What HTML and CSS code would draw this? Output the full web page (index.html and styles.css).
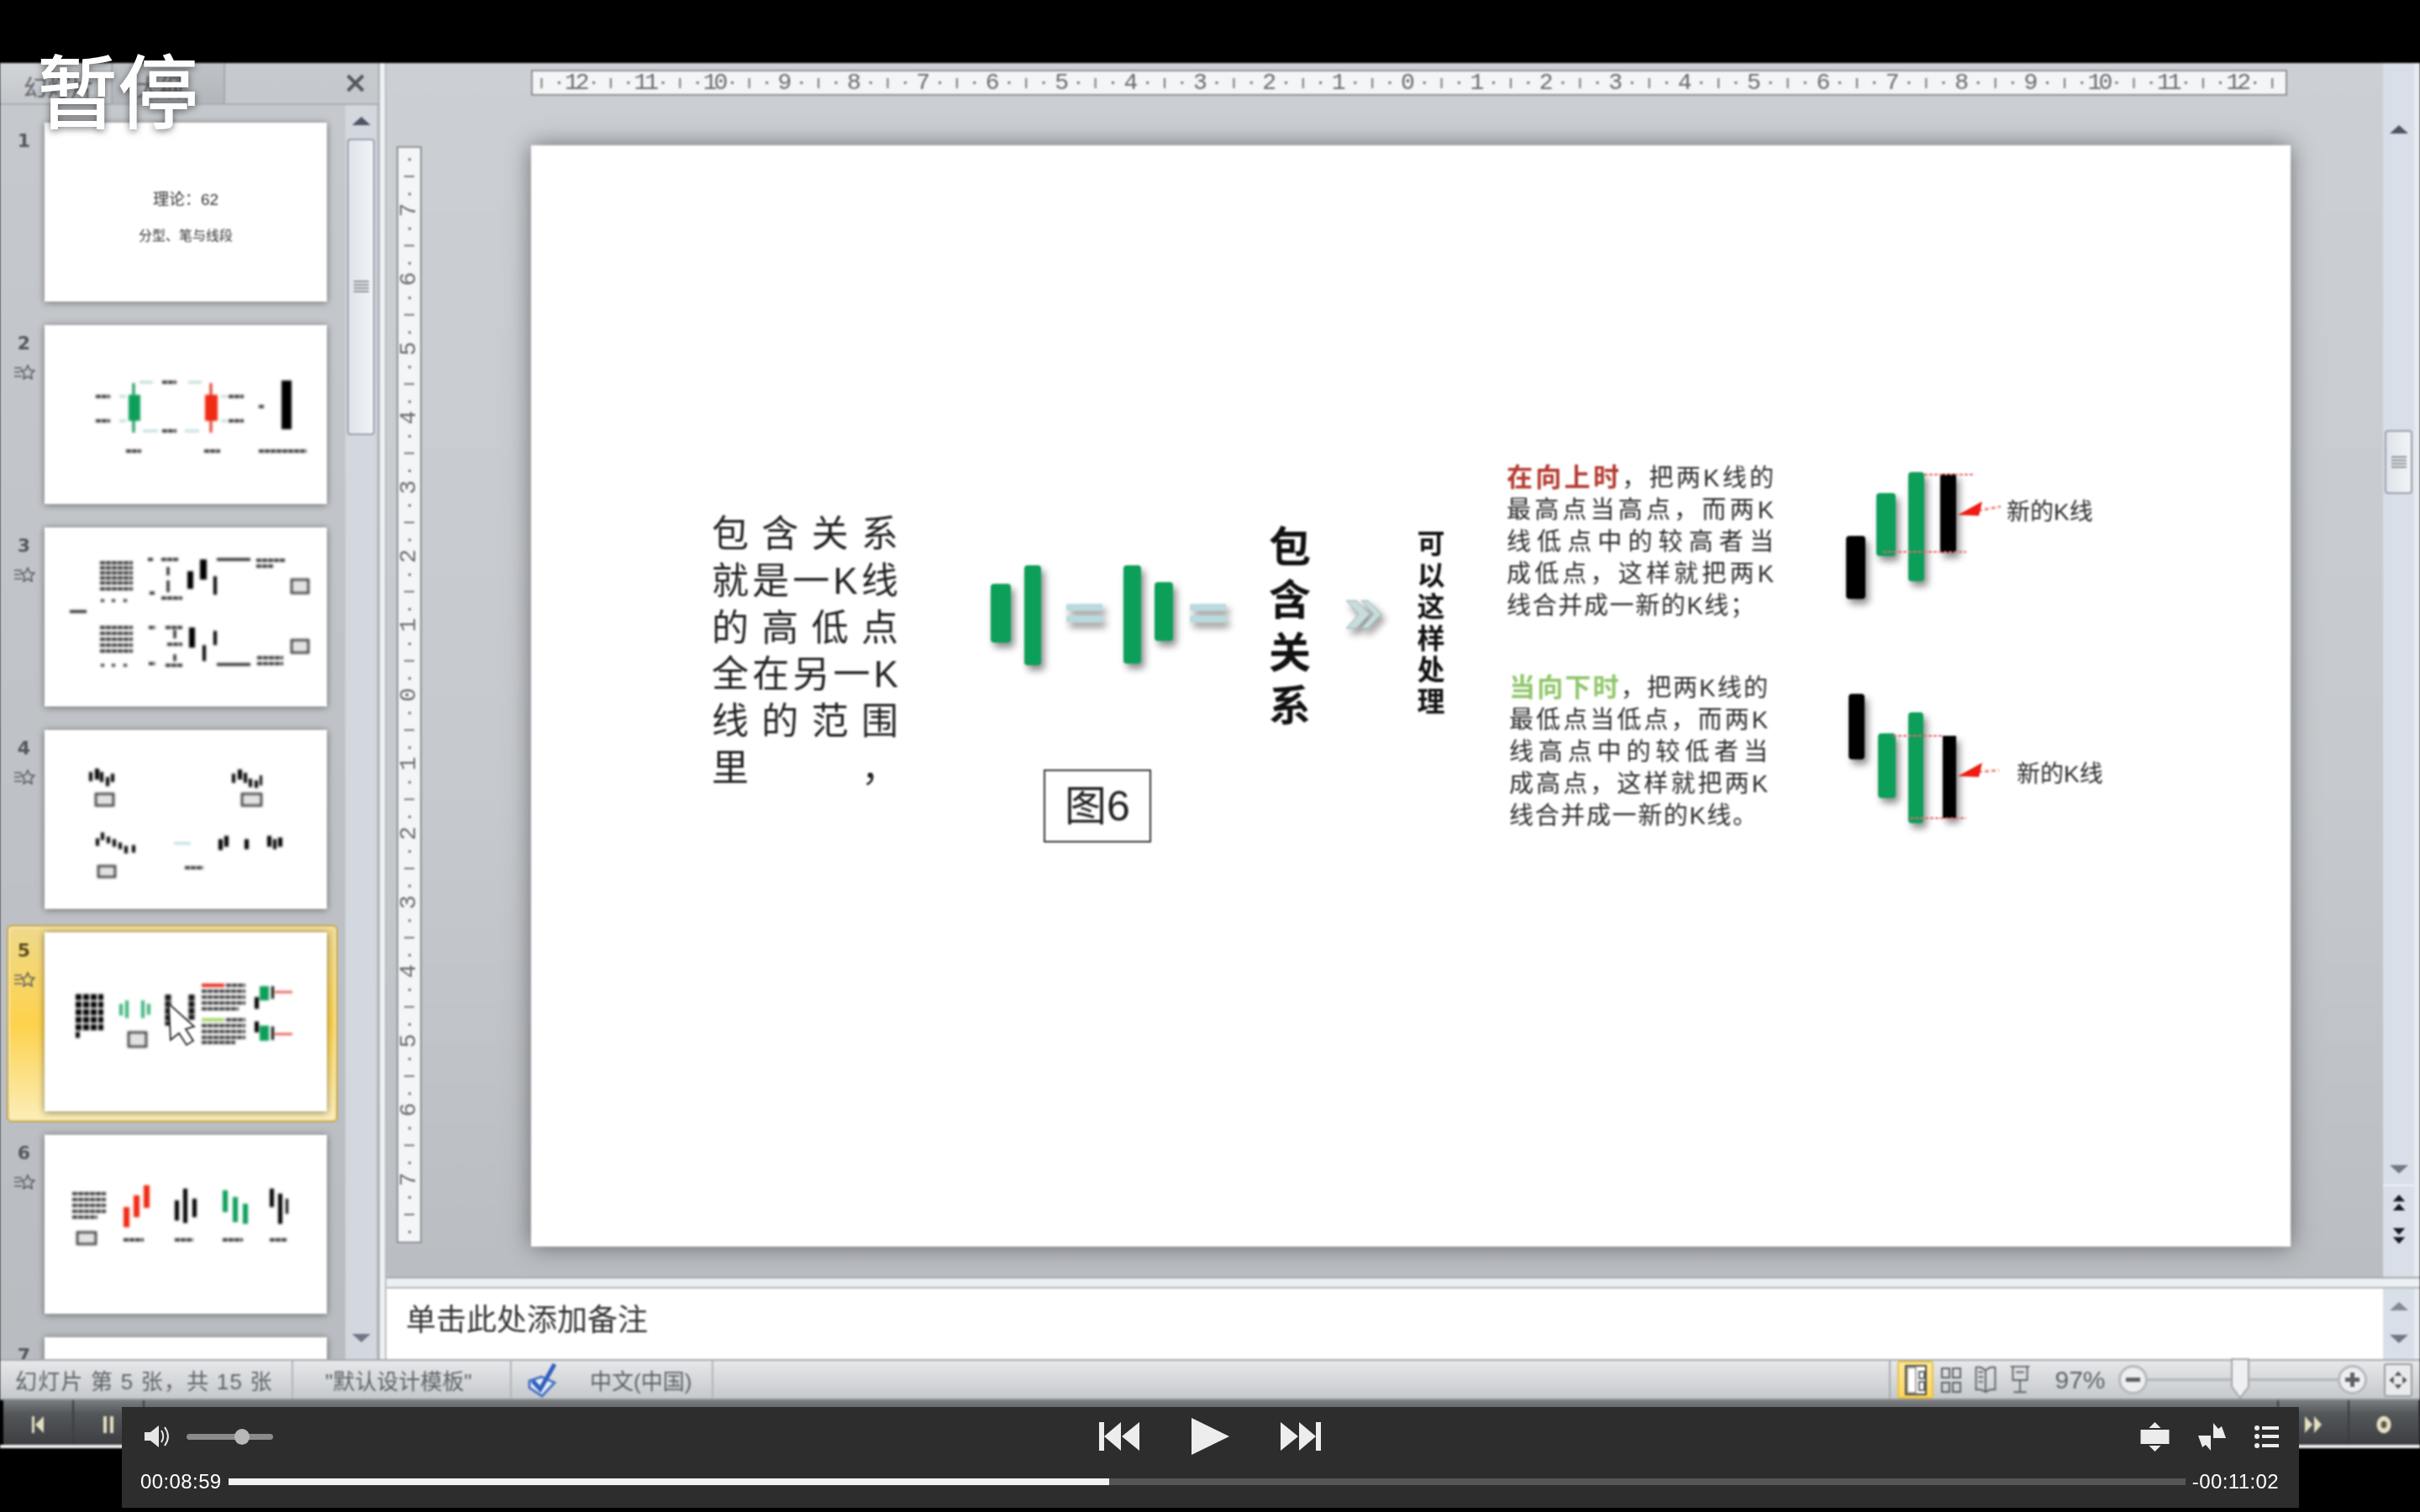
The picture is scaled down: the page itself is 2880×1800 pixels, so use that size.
FILE: index.html
```html
<!DOCTYPE html>
<html lang="zh-CN">
<head>
    <meta charset="UTF-8">
    <title>幻灯片播放</title>
    <link rel="stylesheet" href="styles.css">
</head>
<body>

    <div class="app">
        <div class="panes">

            <!-- slide list -->
            <aside class="side">
                <div class="tabs">
                    <div class="tab tab-on">幻灯片</div>
                    <div class="tab">大纲</div>
                    <svg class="close" viewBox="0 0 24 24"><path d="M3 3 21 21M21 3 3 21"/></svg>
                </div>
                <div class="side-body">
                    <div class="thumbs">
                        <div class="row">
                            <div class="gutter"><b>1</b></div>
                            <div class="thumb thumb-title">
                                <p class="t1">理论：62</p>
                                <p class="t2">分型、笔与线段</p>
                            </div>
                        </div>
                        <div class="row">
                            <div class="gutter"><b>2</b><svg class="star" viewBox="0 0 26 18"><use href="#star"/></svg></div>
                            <div class="thumb">
                                <svg viewBox="0 0 336 213">
                                    <path class="cy" d="M113 68h16M171 68h16M89 85h8M89 114h8M210 85h7M210 114h7M117 126h18M167 126h17"/>
                                    <path class="tx" d="M140 68h17M61 85h17M61 114h17M219 85h18M219 114h18M140 126h17M97 150h18M190 150h19M255 150h57M255 97h7"/>
                                    <path class="wick-g" d="M106 69v59"/><rect class="g" x="100" y="83" width="14" height="31"/>
                                    <path class="wick-r" d="M198 69v59"/><rect class="r" x="191" y="83" width="15" height="31"/>
                                    <rect class="k" x="282" y="66" width="12" height="58"/>
                                </svg>
                            </div>
                        </div>
                        <div class="row">
                            <div class="gutter"><b>3</b><svg class="star" viewBox="0 0 26 18"><use href="#star"/></svg></div>
                            <div class="thumb">
                                <svg viewBox="0 0 336 213">
                                    <path class="tx" d="M66 42h39M66 48h39M66 54h39M66 60h39M66 66h39M66 73h39M123 38h7M139 38h21M125 78h7M139 84h25M252 39h35M252 46h20M66 119h39M66 126h39M66 133h39M66 140h39M66 147h39M124 119h8M124 162h8M144 119h20M146 139h18M144 164h20M253 155h31M253 162h31"/>
                                    <path class="bar" d="M67 87h4M80 87h4M94 87h4M30 100h20M67 164h4M80 164h4M94 164h4M205 38h40M205 163h40M147 47v10M147 63v14M155 122v10M155 151v8"/>
                                    <rect class="k" x="170" y="52" width="7" height="21"/><rect class="k" x="185" y="38" width="8" height="24"/><rect class="k" x="201" y="58" width="4" height="22"/>
                                    <rect class="k" x="172" y="119" width="7" height="24"/><rect class="k" x="188" y="140" width="4" height="19"/><rect class="k" x="201" y="123" width="4" height="17"/>
                                    <rect class="box" x="294" y="62" width="20" height="16"/><rect class="box" x="294" y="134" width="20" height="15"/>
                                </svg>
                            </div>
                        </div>
                        <div class="row">
                            <div class="gutter"><b>4</b><svg class="star" viewBox="0 0 26 18"><use href="#star"/></svg></div>
                            <div class="thumb">
                                <svg viewBox="0 0 336 213">
                                    <rect class="k" x="53" y="50" width="4" height="11"/><rect class="k" x="60" y="46" width="5" height="13"/><rect class="k" x="66" y="50" width="4" height="12"/><rect class="k" x="73" y="56" width="4" height="11"/><rect class="k" x="79" y="52" width="4" height="10"/>
                                    <rect class="k" x="223" y="52" width="4" height="11"/><rect class="k" x="230" y="47" width="5" height="12"/><rect class="k" x="237" y="51" width="4" height="12"/><rect class="k" x="243" y="58" width="4" height="10"/><rect class="k" x="250" y="60" width="4" height="9"/><rect class="k" x="256" y="54" width="3" height="12"/>
                                    <rect class="k" x="61" y="129" width="4" height="9"/><rect class="k" x="67" y="122" width="4" height="9"/><rect class="k" x="74" y="127" width="4" height="8"/><rect class="k" x="81" y="130" width="4" height="9"/><rect class="k" x="88" y="134" width="4" height="8"/><rect class="k" x="95" y="138" width="4" height="9"/><rect class="k" x="104" y="137" width="4" height="9"/>
                                    <rect class="k" x="207" y="130" width="5" height="13"/><rect class="k" x="214" y="126" width="5" height="13"/><rect class="k" x="238" y="130" width="5" height="12"/><rect class="k" x="265" y="126" width="5" height="13"/><rect class="k" x="272" y="130" width="4" height="12"/><rect class="k" x="278" y="128" width="5" height="11"/>
                                    <path class="cy" d="M154 135h20"/><path class="tx" d="M167 164h22"/>
                                    <rect class="box" x="61" y="76" width="21" height="14"/><rect class="box" x="235" y="76" width="23" height="14"/><rect class="box" x="64" y="162" width="20" height="13"/>
                                </svg>
                            </div>
                        </div>
                        <div class="row row-on">
                            <div class="gutter"><b>5</b><svg class="star" viewBox="0 0 26 18"><use href="#star"/></svg></div>
                            <div class="thumb">
                                <svg viewBox="0 0 336 213">
                                    <path class="big" d="M37 77h33M37 86h33M37 95h33M37 104h33M37 113h33M37 122h5"/>
                                    <rect class="g2" x="89" y="85" width="4" height="14"/><rect class="g2" x="96" y="81" width="4" height="21"/><rect class="g2" x="115" y="81" width="4" height="21"/><rect class="g2" x="122" y="85" width="4" height="13"/>
                                    <path class="col" d="M147 74v37M175 74v30"/>
                                    <path class="tx" d="M216 63h23M187 70h52M187 77h52M187 84h52M187 91h44M216 104h23M187 111h52M187 118h52M187 125h52M187 131h40"/>
                                    <path class="rd" d="M187 63h27"/><path class="rd-thin" d="M274 71h21M274 121h21"/><path class="lg" d="M187 104h27"/>
                                    <rect class="k" x="250" y="77" width="5" height="14"/><rect class="g" x="256" y="64" width="11" height="17"/><rect class="k" x="270" y="64" width="3" height="15"/>
                                    <rect class="k" x="250" y="106" width="5" height="13"/><rect class="g" x="256" y="111" width="11" height="18"/><rect class="k" x="270" y="112" width="3" height="16"/>
                                    <rect class="box" x="100" y="119" width="21" height="17"/>
                                </svg>
                                <svg class="cursor" viewBox="0 0 336 213"><path d="M148 85 150 128 160 120 169 134 177 129 168 115 178 112Z"/></svg>
                            </div>
                        </div>
                        <div class="row">
                            <div class="gutter"><b>6</b><svg class="star" viewBox="0 0 26 18"><use href="#star"/></svg></div>
                            <div class="thumb">
                                <svg viewBox="0 0 336 213">
                                    <path class="tx" d="M33 70h40M33 77h40M33 84h40M33 91h40M33 98h30M94 125h24M155 125h22M212 125h24M268 125h20"/>
                                    <rect class="box" x="39" y="116" width="22" height="14"/>
                                    <rect class="r" x="94" y="86" width="7" height="24"/><rect class="r" x="106" y="72" width="7" height="26"/><rect class="r" x="118" y="60" width="7" height="27"/>
                                    <rect class="k" x="155" y="78" width="5" height="24"/><rect class="k" x="165" y="64" width="5" height="41"/><rect class="k" x="176" y="76" width="5" height="22"/>
                                    <rect class="g" x="212" y="66" width="6" height="26"/><rect class="g" x="224" y="74" width="6" height="30"/><rect class="g" x="236" y="82" width="6" height="24"/>
                                    <rect class="k" x="268" y="64" width="5" height="22"/><rect class="k" x="278" y="70" width="5" height="36"/><rect class="k" x="287" y="76" width="3" height="18"/>
                                </svg>
                            </div>
                        </div>
                        <div class="row">
                            <div class="gutter"><b>7</b></div>
                            <div class="thumb"></div>
                        </div>
                    </div>
                    <div class="scroll scroll-side">
                        <i class="arrow arrow-up"></i>
                        <div class="scroll-thumb scroll-thumb-long"><span class="grip"></span></div>
                        <i class="arrow arrow-down arrow-end"></i>
                    </div>
                </div>
            </aside>

            <div class="split-v"></div>

            <!-- editor -->
            <main class="editor">
                <div class="work">
                    <div class="canvas">
                        <div class="ruler-h">
                            <span>12</span><span>11</span><span>10</span><span>9</span><span>8</span><span>7</span><span>6</span><span>5</span><span>4</span><span>3</span><span>2</span><span>1</span><span>0</span><span>1</span><span>2</span><span>3</span><span>4</span><span>5</span><span>6</span><span>7</span><span>8</span><span>9</span><span>10</span><span>11</span><span>12</span>
                        </div>
                        <div class="ruler-v">
                            <span>7</span><span>6</span><span>5</span><span>4</span><span>3</span><span>2</span><span>1</span><span>0</span><span>1</span><span>2</span><span>3</span><span>4</span><span>5</span><span>6</span><span>7</span>
                        </div>

                        <div class="slide">
                            <svg class="art" viewBox="0 0 2093 1311">
                                <g class="shadow">
                                    <rect class="g" x="547" y="522" width="24" height="70" rx="4"/>
                                    <rect class="g" x="587" y="500" width="20" height="119" rx="4"/>
                                    <rect class="g" x="705" y="500" width="21" height="117" rx="4"/>
                                    <rect class="g" x="742" y="520" width="22" height="70" rx="4"/>
                                    <path class="eq" d="M637 550h43M637 564h43M784 550h43M784 564h43"/>
                                    <path class="chev" d="M970 542H982L998 558 982 575H970L985 558ZM988 542H996L1012 558 996 575H988L1003 558Z"/>

                                    <rect class="k" x="1565" y="465" width="23" height="75" rx="4"/>
                                    <rect class="g" x="1601" y="414" width="23" height="75" rx="4"/>
                                    <rect class="g" x="1639" y="389" width="19" height="130" rx="4"/>
                                    <rect class="k" x="1677" y="391" width="19" height="94"/>

                                    <rect class="k" x="1568" y="653" width="19" height="78" rx="4"/>
                                    <rect class="g" x="1603" y="700" width="21" height="77" rx="4"/>
                                    <rect class="g" x="1639" y="675" width="18" height="132" rx="4"/>
                                    <rect class="k" x="1680" y="703" width="16" height="98"/>
                                </g>
                                <path class="dash" d="M1658 392h60M1609 484h99M1621 703h59M1641 801h67"/>
                                <path class="tail" d="M1722 435 1749 430M1722 746 1747 744"/>
                                <path class="head" d="M1698 440 1727 424 1723 441ZM1698 751 1727 735 1723 752Z"/>
                            </svg>

                            <div class="para">
                                <div>包含关系</div>
                                <div>就是一K线</div>
                                <div>的高低点</div>
                                <div>全在另一K</div>
                                <div>线的范围</div>
                                <div>里 ，</div>
                            </div>
                            <div class="fig-box">图6</div>
                            <div class="head-big">包含关系</div>
                            <div class="head-small">可以这样处理</div>

                            <div class="note note-up">
                                <div><b class="red">在向上时</b>，把两K线的</div>
                                <div>最高点当高点，而两K</div>
                                <div>线低点中的较高者当</div>
                                <div>成低点，这样就把两K</div>
                                <div class="line-short">线合并成一新的K线；</div>
                            </div>
                            <div class="note note-down">
                                <div><b class="green">当向下时</b>，把两K线的</div>
                                <div>最低点当低点，而两K</div>
                                <div>线高点中的较低者当</div>
                                <div>成高点，这样就把两K</div>
                                <div class="line-short">线合并成一新的K线。</div>
                            </div>
                            <div class="tag tag-up">新的K线</div>
                            <div class="tag tag-down">新的K线</div>
                        </div>
                    </div>

                    <div class="scroll scroll-main">
                        <i class="arrow arrow-up"></i>
                        <div class="scroll-thumb scroll-thumb-short"><span class="grip"></span></div>
                        <i class="arrow arrow-down arrow-low"></i>
                        <div class="page-btns">
                            <svg viewBox="0 0 20 24"><path d="M10 0 18 9H2ZM10 12 18 21H2Z"/></svg>
                            <svg viewBox="0 0 20 24"><path d="M2 3H18L10 12ZM2 15H18L10 24Z"/></svg>
                        </div>
                    </div>
                </div>

                <div class="split-h"></div>

                <div class="notes">
                    <div class="notes-text">单击此处添加备注</div>
                    <div class="scroll scroll-notes">
                        <i class="arrow arrow-up"></i>
                        <i class="arrow arrow-down"></i>
                    </div>
                </div>
            </main>
        </div>

        <!-- status bar -->
        <footer class="status">
            <div class="st st-count">幻灯片 第 5 张，共 15 张</div>
            <div class="st st-theme">"默认设计模板"</div>
            <div class="st st-lang">
                <svg class="check" viewBox="0 0 36 42"><path class="check-doc" d="M3 22 17 17 33 24 18 40 3 30Z"/><path class="check-mark" d="M7 22 16 32 33 2" /></svg>
                <span>中文(中国)</span>
            </div>
            <div class="st-right">
                <div class="view view-on"><svg viewBox="0 0 26 36"><rect class="v-line" x="1" y="1" width="24" height="34"/><rect class="v-fill" x="3" y="3" width="10" height="30"/><path class="v-thin" d="M17 8h6v8h-6zM17 20h6v10h-6z"/></svg></div>
                <div class="view"><svg viewBox="0 0 26 36"><path class="v-thin" d="M2 4h9v11H2zM15 4h9v11h-9zM2 21h9v11H2zM15 21h9v11h-9z"/></svg></div>
                <div class="view"><svg viewBox="0 0 26 40"><path class="v-thin" d="M13 8C9 4 5 3 1 4V32C5 31 9 32 13 35 17 32 21 31 25 32V4C21 3 17 4 13 8ZM13 8V35M4 10h6M4 16h6M4 22h6"/></svg></div>
                <div class="view"><svg viewBox="0 0 26 40"><path class="v-thin" d="M1 3H25M4 3V20H22V3M8 10H18M13 20V34M5 35H21"/></svg></div>
                <div class="zoom-pct">97%</div>
                <div class="zoom-btn"><i class="sign-h"></i></div>
                <div class="zoom-track"><svg class="zoom-thumb" viewBox="0 0 22 48"><path d="M1 1H21V34L11 47 1 34Z"/></svg></div>
                <div class="zoom-btn"><i class="sign-h"></i><i class="sign-v"></i></div>
                <div class="fit"><svg viewBox="0 0 34 36"><path d="M17 6 22 12H12ZM17 30 12 24H22ZM5 18 11 13V23ZM29 18 23 23V13Z"/></svg></div>
            </div>
        </footer>

        <!-- slideshow task bar, mostly hidden by the player -->
        <div class="taskbar">
            <div class="task task-first"><svg viewBox="0 0 16 24"><path d="M1 2H4V22H1ZM15 2V22L5 12Z"/></svg></div>
            <div class="task"><svg viewBox="0 0 16 24"><path d="M2 2H6V22H2ZM10 2H14V22H10Z"/></svg></div>
            <div class="task task-fill"></div>
            <div class="task task-end"><svg viewBox="0 0 22 24"><path d="M1 2 10 12 1 22ZM12 2 21 12 12 22Z"/></svg></div>
            <div class="task task-end"><svg class="rec" viewBox="0 0 24 28"><ellipse cx="12" cy="14" rx="10" ry="12"/><ellipse class="rec-in" cx="12" cy="14" rx="4" ry="5"/></svg></div>
        </div>
    </div>

    <div class="pause">暂停</div>

    <!-- video player -->
    <section class="player">
        <div class="player-top">
            <div class="vol">
                <svg class="vol-icon" viewBox="0 0 31 28"><path d="M1 9H8L18 1V27L8 19H1Z"/><path class="vol-arc" d="M21 7C24 11 24 17 21 21M25 3C30 10 30 18 25 25"/></svg>
                <div class="vol-track"><span class="vol-knob"></span></div>
            </div>
            <div class="transport">
                <svg class="skip" viewBox="0 0 48 34"><path d="M0 0H6V34H0ZM26 0V34L6 17ZM48 0V34L27 17Z"/></svg>
                <svg class="play" viewBox="0 0 46 44"><path d="M1 0 46 22 1 44Z"/></svg>
                <svg class="skip" viewBox="0 0 48 34"><path d="M0 0 21 17 0 34ZM22 0 42 17 22 34ZM42 0H48V34H42Z"/></svg>
            </div>
            <div class="tools">
                <svg class="tool-size" viewBox="0 0 34 35"><path d="M0 9H34V26H0ZM17 0 24 7H10ZM17 35 10 28H24Z"/></svg>
                <svg class="tool-size" viewBox="0 0 35 33"><path d="M19 0 25 7 29 4 34 18H19ZM16 33 10 26 6 29 1 15H16Z"/></svg>
                <svg class="tool-list" viewBox="0 0 29 27"><circle cx="3" cy="3" r="3"/><circle cx="3" cy="13" r="3"/><circle cx="3" cy="24" r="3"/><path d="M9 1H29V5H9ZM9 11H29V15H9ZM9 22H29V26H9Z"/></svg>
            </div>
        </div>
        <div class="player-bottom">
            <span class="time">00:08:59</span>
            <div class="progress"><div class="progress-done" style="width: 45%"></div></div>
            <span class="time">-00:11:02</span>
        </div>
    </section>

    <svg class="defs" width="0" height="0">
        <defs>
            <g id="star">
                <path class="star-out" d="M17 1 19.500 6.500 25 7.200 21 11 22 17 17 14 12 17 13 11 9 7.200 14.500 6.500Z"/>
                <path class="star-lines" d="M1 4H10M1 9H8M1 14H10"/>
            </g>
        </defs>
    </svg>

</body>
</html>
```

FILE: styles.css
```css
* {
    box-sizing: border-box;
}

body {
    position: relative;
    width: 2880px;
    height: 1800px;
    margin: 0;
    padding-top: 75px;
    overflow: hidden;
    background-color: #000;
    font-family: "Liberation Sans", "Noto Sans CJK SC", sans-serif;
    color: #333;
}

p {
    margin: 0;
}

.defs {
    position: absolute;
}

.app {
    display: flex;
    flex-direction: column;
    height: 1649px;
    filter: blur(1px);
}

.panes {
    display: grid;
    grid-template-columns: 450px 10px 1fr;
    height: 1543px;
}

/* slide list */
.side {
    display: flex;
    flex-direction: column;
    min-height: 0;
    background: linear-gradient(#c6c9cd, #b9bcc0);
}

.tabs {
    display: flex;
    align-items: center;
    height: 50px;
    flex-shrink: 0;
    border-bottom: 2px solid #a9adb2;
}

.tab {
    width: 134px;
    height: 100%;
    padding: 8px 0 0 28px;
    border-right: 2px solid #a4a8ad;
    font-size: 28px;
    color: #66696d;
    background: linear-gradient(#bfc3c7, #b3b6ba);
}

.tab-on {
    background: linear-gradient(#d2d5d8, #c4c7cb);
}

.close {
    width: 24px;
    height: 24px;
    margin-left: auto;
    margin-right: 15px;
    fill: none;
    stroke: #53575c;
    stroke-width: 4;
}

.side-body {
    display: flex;
    flex: 1;
    min-height: 0;
}

.thumbs {
    display: flex;
    flex-direction: column;
    gap: 28px;
    width: 411px;
    padding-top: 21px;
    overflow: hidden;
    flex-shrink: 0;
}

.row {
    position: relative;
    display: flex;
    flex-shrink: 0;
}

.row-on::before {
    content: "";
    position: absolute;
    left: 8px;
    top: -9px;
    width: 390px;
    height: 231px;
    border: 2px solid #c8a950;
    border-radius: 6px;
    background: linear-gradient(#efd98c, #fed24c 50%, #fbeeb8);
    box-shadow: inset 0 0 0 2px #f6e8b0;
}

.gutter {
    position: relative;
    display: flex;
    flex-direction: column;
    align-items: center;
    width: 53px;
    padding: 9px 0 0 4px;
    font-family: "DejaVu Sans", sans-serif;
    font-size: 22px;
    color: #54585d;
}

.gutter b {
    height: 26px;
    line-height: 26px;
}

.row-on .gutter {
    color: #5d4f1f;
}

.star {
    width: 26px;
    height: 18px;
    margin-top: 12px;
}

.star-out {
    fill: none;
    stroke: #5a5e63;
    stroke-width: 1.6;
}

.star-lines {
    stroke: #5a5e63;
    stroke-width: 1.6;
}

.thumb {
    position: relative;
    width: 336px;
    height: 213px;
    background-color: #fff;
    box-shadow: 0 1px 8px rgba(50, 50, 50, .6);
}

.thumb svg {
    display: block;
    width: 336px;
    height: 213px;
    filter: blur(1.2px);
}

.thumb .cursor {
    position: absolute;
    left: 0;
    top: 0;
    filter: none;
    fill: #fff;
    stroke: #333;
    stroke-width: 2;
}

.thumb-title {
    text-align: center;
    color: #333;
}

.t1 {
    padding-top: 76px;
    font-size: 19px;
}

.t2 {
    padding-top: 18px;
    font-size: 16px;
}

/* shapes shared by the thumbs and the slide */
.k {
    fill: #000;
}

.g {
    fill: #0c9f59;
}

.g2 {
    fill: #37b27a;
}

.r {
    fill: #f02a14;
}

.cy {
    stroke: #bfdcdc;
    stroke-width: 3;
    fill: none;
}

.tx {
    stroke: #222;
    stroke-width: 3.500;
    stroke-dasharray: 6 1;
    fill: none;
}

.big {
    stroke: #000;
    stroke-width: 7;
    stroke-dasharray: 7 2;
    fill: none;
}

.col {
    stroke: #111;
    stroke-width: 7;
    stroke-dasharray: 7 1;
    fill: none;
}

.bar {
    stroke: #111;
    stroke-width: 3;
    fill: none;
}

.rd {
    stroke: #e8261a;
    stroke-width: 4;
    fill: none;
}

.rd-thin {
    stroke: #e8261a;
    stroke-width: 2;
    fill: none;
}

.lg {
    stroke: #a6d76a;
    stroke-width: 4;
    fill: none;
}

.wick-g {
    stroke: #0c8f50;
    stroke-width: 3;
}

.wick-r {
    stroke: #d8321f;
    stroke-width: 3;
}

.box {
    fill: #e2e2e2;
    stroke: #333;
    stroke-width: 2.500;
}

/* scrollbars */
.scroll {
    position: relative;
    display: flex;
    flex-direction: column;
    align-items: center;
    width: 37px;
    flex-shrink: 0;
    background-color: #d9dfe8;
}

.arrow {
    display: block;
    width: 0;
    height: 0;
    border-left: 11px solid transparent;
    border-right: 11px solid transparent;
}

.arrow-up {
    border-bottom: 10px solid #4c5563;
}

.arrow-down {
    border-top: 10px solid #6f7785;
}

.scroll-thumb {
    display: flex;
    align-items: center;
    justify-content: center;
    width: 33px;
    border: 2px solid #9aa1ab;
    border-radius: 4px;
    background: linear-gradient(90deg, #dfe4ea, #f2f4f7);
}

.grip {
    width: 18px;
    height: 15px;
    background: repeating-linear-gradient(#8d929a 0 2px, transparent 2px 4px);
}

.scroll-side {
    padding-top: 14px;
    background-color: #d3d8df;
}

.scroll-thumb-long {
    height: 353px;
    margin-top: 16px;
}

.arrow-end {
    margin-top: auto;
    margin-bottom: 20px;
}

.scroll-main {
    padding-top: 74px;
}

.scroll-thumb-short {
    height: 76px;
    margin-top: 353px;
}

.arrow-low {
    margin-top: 799px;
}

.page-btns {
    display: flex;
    flex-direction: column;
    gap: 15px;
    width: 100%;
    align-items: center;
    margin-top: 13px;
    padding-top: 10px;
    border-top: 2px solid #eef1f5;
}

.page-btns svg {
    width: 18px;
    height: 22px;
    fill: #15181c;
}

.scroll-notes {
    padding-top: 16px;
    gap: 29px;
}

.scroll-notes .arrow-up {
    border-bottom-color: #858b95;
}

/* editor */
.split-v {
    background: linear-gradient(90deg, #a9adb2 0 2px, #eef1f4 2px 8px, #b9bdc2 8px);
}

.editor {
    display: flex;
    flex-direction: column;
    min-width: 0;
    background-color: #e8ecf0;
}

.work {
    display: flex;
    justify-content: space-between;
    height: 1445px;
    padding-right: 7px;
    background: linear-gradient(90deg, transparent 2376px, #e7ebf0 2376px), linear-gradient(#ccd0d4, #c6c9cd 60%, #babdc1);
}

.canvas {
    display: grid;
    grid-template-columns: 30px 2090px;
    grid-template-rows: 31px 1311px;
    column-gap: 130px;
    row-gap: 59px;
    padding: 8px 0 0 12px;
}

.ruler-h,
.ruler-v {
    display: flex;
    justify-content: center;
    border: 2px solid #8d9196;
    font-family: "Liberation Mono", monospace;
    font-size: 28px;
    color: #666a6e;
    background-color: #f4f5f6;
}

.ruler-h {
    grid-column: 2;
    grid-row: 1;
    align-items: center;
    padding-right: 7px;
    background-image: linear-gradient(90deg, #777 2px, transparent 2px), linear-gradient(90deg, #777 3px, transparent 3px);
    background-size: 82.4px 12px, 41.2px 3px;
    background-position: 9.500px center, 30px center;
    background-repeat: repeat-x;
}

.ruler-h span {
    width: 82.4px;
    text-align: center;
    letter-spacing: -4px;
}

.ruler-v {
    grid-column: 1;
    grid-row: 2;
    flex-direction: column;
    align-items: center;
    height: 1306px;
    margin-top: 1px;
    background-image: linear-gradient(#777 2px, transparent 2px), linear-gradient(#777 3px, transparent 3px);
    background-size: 12px 82.4px, 3px 41.2px;
    background-position: center 33px, center 12.400px;
    background-repeat: repeat-y;
}

.ruler-v span {
    height: 82.4px;
    line-height: 26px;
    text-align: center;
    writing-mode: vertical-rl;
    transform: rotate(180deg);
}

/* the slide is a free canvas */
.slide {
    position: relative;
    grid-column: 2;
    grid-row: 2;
    width: 2094px;
    height: 1311px;
    background-color: #fff;
    box-shadow: 0 0 26px rgba(60, 62, 66, .68);
}

.art {
    position: absolute;
    left: 0;
    top: 0;
    width: 2093px;
    height: 1311px;
}

.shadow {
    filter: drop-shadow(4px 6px 4px rgba(0, 0, 0, .45));
}

.eq {
    stroke: #b9dade;
    stroke-width: 8;
    fill: none;
}

.chev {
    fill: #c7dcdc;
    stroke: #9fb5b5;
    stroke-width: 1;
}

.dash {
    stroke: #e8686a;
    stroke-width: 2;
    stroke-dasharray: 4 2;
    fill: none;
}

.tail {
    stroke: #f08a80;
    stroke-width: 3;
    stroke-dasharray: 5 3;
    fill: none;
}

.head {
    fill: #ee1c14;
}

.para {
    position: absolute;
    left: 215px;
    top: 435px;
    width: 222px;
    font-size: 44px;
    line-height: 55.800px;
    color: #222;
}

.para div {
    text-align: justify;
    text-align-last: justify;
}

.fig-box {
    position: absolute;
    left: 610px;
    top: 743px;
    display: flex;
    align-items: center;
    justify-content: center;
    width: 128px;
    height: 87px;
    border: 2px solid #333;
    font-size: 50px;
    line-height: 50px;
    color: #222;
}

.head-big,
.head-small {
    position: absolute;
    writing-mode: vertical-rl;
    font-weight: bold;
    color: #111;
}

.head-big {
    left: 862px;
    top: 452px;
    font-size: 50px;
    letter-spacing: 13px;
}

.head-small {
    left: 1044px;
    top: 457px;
    font-size: 33px;
    letter-spacing: 4.500px;
}

.note {
    position: absolute;
    font-size: 29px;
    line-height: 38px;
    color: #2a2a2a;
}

.note div {
    text-align: justify;
    text-align-last: justify;
}

.note b {
    font-size: 31px;
}

.note-up {
    left: 1161px;
    top: 377px;
    width: 318px;
}

.note-down {
    left: 1164px;
    top: 627px;
    width: 308px;
}

.note .line-short {
    width: 295px;
}

.red {
    color: #b43a30;
}

.green {
    color: #90c66a;
}

.tag {
    position: absolute;
    font-size: 28px;
    line-height: 32px;
    white-space: nowrap;
    color: #2a2a2a;
}

.tag-up {
    left: 1756px;
    top: 421px;
}

.tag-down {
    left: 1768px;
    top: 733px;
}

/* notes */
.split-h {
    height: 14px;
    border-top: 2px solid #a6aaaf;
    border-bottom: 2px solid #b4b8bc;
    background-color: #edf0f2;
}

.notes {
    display: flex;
    justify-content: space-between;
    flex: 1;
    padding-right: 7px;
    background: linear-gradient(90deg, #fff 2376px, #e7ebf0 2376px);
}

.notes-text {
    padding: 8px 0 0 23px;
    font-size: 36px;
    color: #333;
}

/* status bar */
.status {
    display: flex;
    align-items: center;
    height: 49px;
    flex-shrink: 0;
    border-top: 2px solid #a6aaaf;
    border-bottom: 2px solid #8f9296;
    font-size: 26px;
    color: #5e6267;
    background: linear-gradient(#e6e8ea, #c6c9cc);
}

.st {
    display: flex;
    align-items: center;
    height: 100%;
    border-right: 2px solid #b2b5b9;
}

.st-count {
    width: 349px;
    padding-left: 18px;
    letter-spacing: 1.200px;
}

.st-theme {
    width: 260px;
    padding-left: 38px;
}

.st-lang {
    width: 240px;
    padding-left: 18px;
}

.check {
    width: 36px;
    height: 42px;
    margin-right: 39px;
}

.check-doc {
    fill: #e8edf6;
    stroke: #4a73c4;
    stroke-width: 3;
}

.check-mark {
    fill: none;
    stroke: #2f5fc0;
    stroke-width: 5;
}

.st-right {
    display: flex;
    align-items: center;
    height: 100%;
    margin-left: auto;
    padding: 0 9px 0 8px;
    border-left: 2px solid #a9acb0;
}

.view {
    display: flex;
    align-items: center;
    justify-content: center;
    width: 41px;
    height: 100%;
}

.view svg {
    width: 26px;
    height: 38px;
}

.view-on {
    width: 43px;
    border: 2px solid #e9c33f;
    border-radius: 4px;
    background: linear-gradient(#fbe8a0, #fbd65e);
}

.v-line {
    fill: #fff;
    stroke: #4e4a3e;
    stroke-width: 2;
}

.v-fill {
    fill: #fff;
    stroke: #4e4a3e;
    stroke-width: 1;
}

.v-thin {
    fill: none;
    stroke: #5f6368;
    stroke-width: 2;
}

.zoom-pct {
    width: 97px;
    padding-left: 6px;
    font-size: 30px;
    text-align: center;
}

.zoom-btn {
    position: relative;
    width: 35px;
    height: 35px;
    border: 3px solid #b5b8bc;
    border-radius: 50%;
    background-color: #eceef0;
}

.sign-h,
.sign-v {
    position: absolute;
    background-color: #5c6065;
}

.sign-h {
    left: 6px;
    top: 12px;
    width: 17px;
    height: 5px;
}

.sign-v {
    left: 12px;
    top: 6px;
    width: 5px;
    height: 17px;
}

.zoom-track {
    position: relative;
    width: 226px;
    height: 3px;
    background-color: #b3b6ba;
}

.zoom-thumb {
    position: absolute;
    left: 99px;
    top: -24px;
    width: 22px;
    height: 48px;
    fill: #eef0f2;
    stroke: #a3a6aa;
    stroke-width: 2;
}

.fit {
    width: 34px;
    height: 40px;
    margin-left: 20px;
    border: 2px solid #9a9da1;
    border-radius: 3px;
    background-color: #e8eaec;
}

.fit svg {
    display: block;
    width: 30px;
    height: 36px;
    fill: #4e5257;
}

/* task bar */
.taskbar {
    display: flex;
    flex: 1;
    padding-left: 4px;
    border-bottom: 4px solid #f2f2f2;
    background: #000;
}

.task {
    display: flex;
    align-items: center;
    justify-content: center;
    width: 84px;
    padding-top: 4px;
    border-right: 2px solid #3a3c3f;
    background: linear-gradient(#7a7d80, #54575a 30%, #3c3e41);
}

.task-fill {
    flex: 1;
}

.task svg {
    width: 16px;
    height: 24px;
    fill: #e5dfc0;
}

.task-end {
    width: 84px;
}

.task-end svg {
    width: 22px;
}

.rec {
    fill: #dcd4a8;
}

.rec-in {
    fill: #5c5a4e;
}

/* pause label from the video */
.pause {
    position: absolute;
    left: 44px;
    top: 44px;
    font-family: "Noto Sans CJK SC", sans-serif;
    font-size: 96px;
    font-weight: 500;
    line-height: 120px;
    color: #fff;
    text-shadow: 0 2px 8px rgba(0, 0, 0, .55);
}

/* player */
.player {
    position: absolute;
    left: 145px;
    top: 1675px;
    width: 2591px;
    height: 120px;
    padding: 0 24px 0 22px;
    color: #fff;
    background-color: #2d2d2d;
    filter: blur(.4px);
}

.player-top {
    display: grid;
    grid-template-columns: 1fr auto 1fr;
    align-items: center;
    height: 70px;
}

.vol {
    display: flex;
    align-items: center;
    gap: 20px;
    padding-left: 4px;
}

.vol-icon {
    width: 31px;
    height: 28px;
    fill: #e6e6e6;
}

.vol-arc {
    fill: none;
    stroke: #e6e6e6;
    stroke-width: 2;
}

.vol-track {
    position: relative;
    width: 103px;
    height: 7px;
    border-radius: 4px;
    background-color: #8a8a8a;
}

.vol-knob {
    position: absolute;
    left: 57px;
    top: -6px;
    width: 18px;
    height: 19px;
    border-radius: 50%;
    background-color: #b8b8b8;
}

.transport {
    display: flex;
    align-items: center;
    gap: 61px;
    fill: #ededed;
}

.skip {
    width: 48px;
    height: 34px;
}

.play {
    width: 46px;
    height: 44px;
}

.tools {
    display: flex;
    align-items: center;
    justify-content: flex-end;
    gap: 33px;
    fill: #ececec;
}

.tool-size {
    width: 35px;
    height: 35px;
}

.tool-list {
    width: 29px;
    height: 27px;
}

.player-bottom {
    display: flex;
    align-items: center;
    gap: 8px;
    height: 38px;
}

.time {
    font-size: 24px;
    letter-spacing: .4px;
    white-space: nowrap;
}

.progress {
    flex: 1;
    height: 8px;
    background-color: #555;
}

.progress-done {
    height: 100%;
    background-color: #f2f2f2;
}
```
